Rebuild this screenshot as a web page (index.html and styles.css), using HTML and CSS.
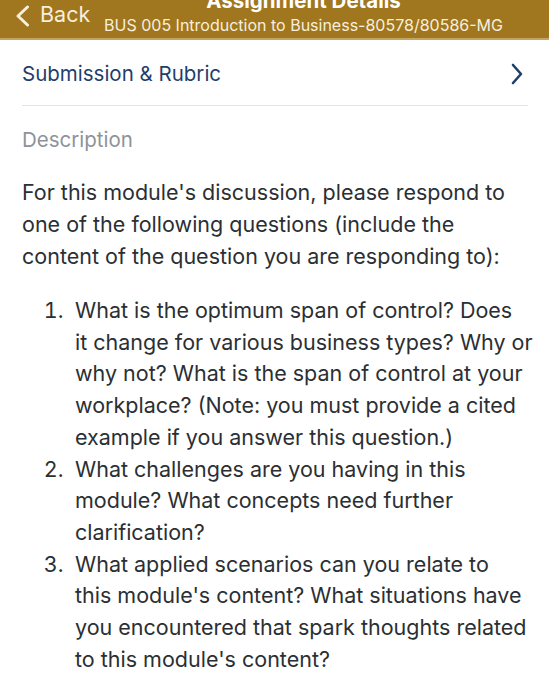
FILE: index.html
```html
<!DOCTYPE html>
<html>
<head>
<meta charset="utf-8">
<link rel="stylesheet" href="styles.css">
</head>
<body>
<header class="navbar">
  <div class="back">
    <svg class="back-chev" width="16" height="22" viewBox="0 0 16 22"><path d="M12.5 2 L3 11 L12.5 20" fill="none" stroke="#f7efdc" stroke-width="3" stroke-linecap="round" stroke-linejoin="round"/></svg>
    <span class="back-text">Back</span>
  </div>
  <div class="titles">
    <div class="title">Assignment Details</div>
    <div class="subtitle">BUS 005 Introduction to Business-80578/80586-MG</div>
  </div>
</header>
<main class="content">
  <div class="row">
    <span class="row-label">Submission &amp; Rubric</span>
    <svg class="row-chev" width="14" height="22" viewBox="0 0 14 22"><path d="M3 2 L11 11 L3 20" fill="none" stroke="#1f3f6b" stroke-width="2.6" stroke-linecap="round" stroke-linejoin="round"/></svg>
  </div>
  <h2 class="section">Description</h2>
  <p class="para">For this module's discussion, please respond to one of the following questions (include the content of the question you are responding to):</p>
  <ol class="list">
    <li>What is the optimum span of control? Does<br>it change for various business types? Why or why not? What is the span of control at your workplace? (Note: you must provide a cited example if you answer this question.)</li>
    <li>What challenges are you having in this module? What concepts need further clarification?</li>
    <li>What applied scenarios can you relate to<br>this module's content? What situations have you encountered that spark thoughts related to this module's content?</li>
  </ol>
</main>
</body>
</html>
```
FILE: styles.css
```css
* { box-sizing: border-box; }
html, body { margin: 0; padding: 0; background: #fff; }
body { font-family: Inter, "Liberation Sans", Arial, sans-serif; overflow: hidden; }

.navbar {
  height: 40px;
  background: #a0761e;
  border-bottom: 2px solid #c5a565;
  display: grid;
  grid-template-areas: "bar";
  overflow: hidden;
}
.back {
  grid-area: bar;
  justify-self: start;
  align-self: start;
  display: flex;
  align-items: center;
  padding-left: 15px;
  padding-top: 2px;
  color: #f7efdc;
}
.back-chev { margin-right: 9px; margin-top: 3px; }
.back-text { font-size: 21.5px; line-height: 22px; margin-top: -2px; }
.titles {
  grid-area: bar;
  justify-self: center;
  align-self: start;
  display: flex;
  flex-direction: column;
  align-items: center;
  padding-left: 58px;
}
.title {
  color: #fff;
  font-weight: 700;
  font-size: 20.5px;
  line-height: 20px;
  margin-top: -9px;
  white-space: nowrap;
}
.subtitle {
  color: #f7efdc;
  font-size: 16px;
  line-height: 18px;
  margin-top: 5px;
  white-space: nowrap;
}

.content { padding: 0 21px 0 22px; }
.row {
  height: 66px;
  display: flex;
  align-items: center;
  justify-content: space-between;
  border-bottom: 1.5px solid #e3e3e5;
  padding-top: 2px;
}
.row-label { color: #1f3f6b; font-size: 20.5px; }
.row-chev { margin-right: 4px; }
.section {
  margin: 0;
  padding-top: 21px;
  font-size: 20.5px;
  font-weight: 400;
  color: #8e939a;
  line-height: 26px;
}
.para {
  margin: 23px 0 0;
  font-size: 21.5px;
  line-height: 32px;
  color: #2b2f33;
}
.list {
  margin: 23px -5px 0 0;
  padding-left: 53px;
  font-size: 21.5px;
  line-height: 31.7px;
  color: #2b2f33;
}
.list li::marker { content: counter(list-item) ".\00a0\00a0"; }
```
